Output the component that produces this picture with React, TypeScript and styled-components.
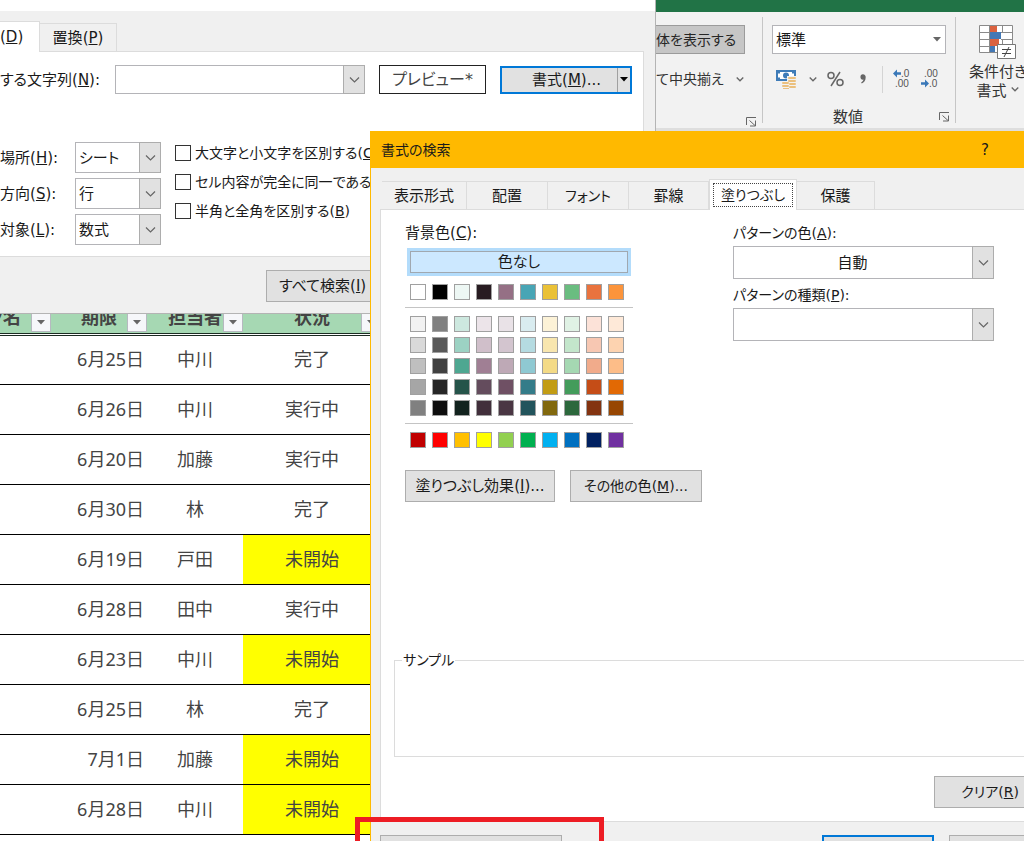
import React from "react";
import styled, { createGlobalStyle, css } from "styled-components";

const GlobalStyle = createGlobalStyle`
  *, *::before, *::after { box-sizing: border-box; }
  html, body { margin: 0; padding: 0; height: 100%; overflow: hidden; }
  body, button, input, select {
    font-family: "DejaVu Sans", "Noto Sans CJK JP", sans-serif;
    font-size: 15px;
    line-height: 20px;
    color: #1a1a1a;
    font-feature-settings: "palt";
  }
`;

const Desktop = styled.div`
  position: relative;
  height: 100vh;
  overflow: hidden;
  background: #fff;
`;

/* ---------- Workbook window ---------- */

const WorkbookTitle = styled.div`
  height: 12px;
  background: #217346;
`;

const Ribbon = styled.div`
  display: flex;
  height: 119px;
  padding: 5px 0 5px 656px;
  background: #f2f2f2;
  border-bottom: 3px solid #dedede;
`;

const RibbonGroup = styled.section<{ $width?: number; $clipped?: boolean }>`
  display: grid;
  grid-template-columns: 100%;
  grid-template-rows: 29px 50px 1fr;
  flex: ${(p) => (p.$width ? `0 0 ${p.$width}px` : "1 0 0")};
  padding: 8px 9px 0 ${(p) => (p.$clipped ? 0 : 9)}px;
  border-right: ${(p) => (p.$width ? "1px solid #c6c6c6" : "0")};
`;

const RibbonRow = styled.div<{ $gap?: number; $inset?: number }>`
  display: flex;
  align-items: center;
  gap: ${(p) => p.$gap ?? 0}px;
  padding-left: ${(p) => p.$inset ?? 0}px;
  white-space: nowrap;
`;

const WrapToggle = styled.button`
  width: 89px;
  height: 29px;
  padding: 0;
  border: 1px solid #9b9b9b;
  border-left: 0;
  background: #c6c6c6;
  color: #262626;
  font-size: 14px;
  text-align: left;
`;

const ToolButton = styled.button<{ $width?: number }>`
  display: flex;
  align-items: center;
  justify-content: center;
  flex: none;
  width: ${(p) => (p.$width ? `${p.$width}px` : "auto")};
  padding: 0;
  gap: 12px;
  border: 0;
  background: none;
  color: #333;
  font-size: 14px;
`;

const GroupFooter = styled.div`
  display: grid;
  grid-template-columns: 1fr 26px;
  align-items: center;
  align-self: end;
  text-align: center;
  color: #333;
  margin: 0 -4px -4px 0;
  button { justify-self: end; }
`;

const Divider = styled.span`
  width: 1px;
  height: 27px;
  background: #d4d4d4;
`;

const ConditionalButton = styled.button`
  display: flex;
  flex-direction: column;
  align-items: center;
  align-self: start;
  width: 66px;
  padding: 0;
  border: 0;
  background: none;
  color: #333;
  white-space: nowrap;
  line-height: 19px;
  svg:first-child { margin-bottom: 3px; }
`;

const FormulaArea = styled.div`
  height: 171px;
  background: #e6e6e6;
`;

const Sheet = styled.table`
  width: calc(100% + 77px);
  margin-left: -77px;
  border-collapse: collapse;
  table-layout: fixed;
  font-family: "Noto Sans", "Noto Sans CJK JP", sans-serif;
  font-size: 18px;
  line-height: 24px;
  color: #444;
`;

const HeadCell = styled.th`
  height: 32px;
  padding: 0;
  background: #a6d8b3;
  border-bottom: 3px double #1c2b22;
`;

const HeadContent = styled.div`
  display: grid;
  height: 30px;
  align-items: center;
  justify-items: center;
  > * { grid-area: 1 / 1; }
`;

const FilterButton = styled.button`
  display: grid;
  place-items: center;
  justify-self: end;
  align-self: end;
  width: 20px;
  height: 20px;
  padding: 0;
  border: 1px solid #b6b9c0;
  background: #f6f7fa;
`;

const Cell = styled.td<{ $align?: string; $fill?: boolean }>`
  height: 50px;
  padding: 0 3px 1px;
  border-bottom: 1px solid #000;
  text-align: ${(p) => p.$align ?? "center"};
  background: ${(p) => (p.$fill ? "#ff0" : "#fff")};
`;

/* ---------- Shared dialog parts ---------- */

const Button = styled.button<{ $width?: number; $primary?: boolean; $small?: boolean }>`
  display: flex;
  align-items: center;
  justify-content: center;
  flex: none;
  width: ${(p) => (p.$width ? `${p.$width}px` : "auto")};
  height: 32px;
  padding: 0 12px;
  border: ${(p) => (p.$primary ? "2px solid #0078d7" : "1px solid #adadad")};
  background: #e1e1e1;
  font-size: ${(p) => (p.$small ? 14 : 15)}px;
  white-space: nowrap;
`;

const Combo = styled.div<{ $width: number; $height: number; $center?: boolean }>`
  display: grid;
  flex: none;
  width: ${(p) => p.$width}px;
  height: ${(p) => p.$height}px;
  > * { grid-area: 1 / 1; }
  select {
    appearance: none;
    width: 100%;
    height: 100%;
    padding: 0 26px 0 3px;
    border: 1px solid #b4b4b8;
    border-radius: 0;
    background: #fff;
    ${(p) => p.$center && css`text-align: center; text-align-last: center; padding-left: 4px;`}
  }
`;

const ComboArrow = styled.span<{ $flat?: boolean }>`
  display: grid;
  place-items: center;
  justify-self: end;
  width: ${(p) => (p.$flat ? 18 : 22)}px;
  pointer-events: none;
  ${(p) => !p.$flat && css`border: 1px solid #adadad; background: #e1e1e1;`}
`;

const Tab = styled.button<{ $active?: boolean; $small?: boolean; $clipped?: boolean; $width: number }>`
  flex: none;
  width: ${(p) => p.$width}px;
  height: ${(p) => (p.$active ? 31 : 28)}px;
  margin-bottom: ${(p) => (p.$active ? -1 : 0)}px;
  padding: 3px;
  border: 1px solid #dcdcdc;
  border-left-width: ${(p) => (p.$active ? 1 : 0)}px;
  border-bottom: 0;
  background: ${(p) => (p.$active ? "#fff" : "#f0f0f0")};
  font-size: ${(p) => (p.$small ? 14 : 15)}px;
  white-space: nowrap;
  ${(p) => p.$clipped && css`padding-left: 0; border-left: 0; text-align: left;`}
`;

const TabFocus = styled.span`
  display: grid;
  place-items: center;
  height: 100%;
  border: 1px dotted #444;
`;

/* ---------- Find window ---------- */

const FindWindow = styled.section`
  position: absolute;
  top: 0;
  left: 0;
  width: 656px;
  background: #f0f0f0;
  border-right: 1px solid #b4b4b4;
  border-bottom: 1px solid #b4b4b4;
`;

const FindTitle = styled.div`
  height: 11px;
  background: #fff;
`;

const FindTabs = styled.div`
  display: flex;
  align-items: flex-end;
  height: 40px;
`;

const FindPanel = styled.div`
  display: flex;
  flex-direction: column;
  gap: 48px;
  margin-right: 11px;
  padding: 13px 0 11px;
  background: #fff;
  border: 1px solid #dcdcdc;
  border-left: 0;
`;

const FindRow = styled.div`
  display: flex;
  align-items: center;
  gap: 14px;
`;

const SearchLabel = styled.label`
  width: 101px;
  white-space: nowrap;
`;

const Preview = styled.output`
  display: grid;
  place-items: center;
  width: 107px;
  height: 29px;
  border: 1px solid #222;
  color: #444;
  font-size: 16px;
`;

const SplitButton = styled.div`
  display: flex;
  width: 132px;
  height: 28px;
  border: 2px solid #0078d7;
  background: #e1e1e1;
  button {
    border: 0;
    padding: 0;
    background: none;
  }
  button:first-child {
    flex: 1;
    padding-left: 14px;
  }
  button:last-child {
    display: grid;
    place-items: center;
    width: 13px;
    border-left: 1px solid #a0a0a0;
  }
`;

const OptionsRow = styled.div`
  display: flex;
  gap: 14px;
`;

const SelectStack = styled.div`
  display: grid;
  grid-template-columns: 75px auto;
  row-gap: 5px;
  align-items: center;
  white-space: nowrap;
`;

const CheckStack = styled.div`
  display: flex;
  flex-direction: column;
  gap: 9px;
  padding-top: 1px;
`;

const CheckLabel = styled.label`
  display: flex;
  align-items: center;
  gap: 4px;
  font-size: 14px;
  white-space: nowrap;
  input {
    appearance: none;
    width: 16px;
    height: 16px;
    margin: 0;
    border: 1px solid #333;
    background: #fff;
  }
`;

const FindFooter = styled.div`
  display: flex;
  padding: 13px 0 11px 266px;
`;

/* ---------- Format window ---------- */

const FormatWindow = styled.section`
  position: absolute;
  top: 131px;
  left: 370px;
  right: -47px;
  background: #f0f0f0;
  border-left: 1px solid #ffb900;
`;

const FormatTitle = styled.header`
  display: flex;
  align-items: center;
  justify-content: space-between;
  height: 37px;
  padding: 0 82px 0 10px;
  background: #ffb900;
  font-size: 14px;
  button {
    padding: 0;
    border: 0;
    background: none;
  }
`;

const FormatTabs = styled.div`
  display: flex;
  align-items: flex-end;
  height: 41px;
  padding-left: 11px;
`;

const FormatPanel = styled.div`
  display: flex;
  flex-direction: column;
  height: 613px;
  margin: 0 11px 0 9px;
  padding: 13px;
  border: 1px solid #dcdcdc;
  background: #fff;
`;

const FillColumns = styled.div`
  display: grid;
  grid-template-columns: 328px 1fr;
  padding-left: 11px;
`;

const Field = styled.div`
  display: flex;
  flex-direction: column;
  align-items: flex-start;
`;

const FieldLabel = styled.label<{ $small?: boolean }>`
  height: 23px;
  font-size: ${(p) => (p.$small ? 14 : 15)}px;
`;

const FieldStack = styled.div`
  display: flex;
  flex-direction: column;
  gap: 6px;
`;

const NoColorButton = styled.button`
  width: 224px;
  height: 28px;
  margin: 2px 2px 0;
  padding: 0;
  border: 3px solid #b3dcfb;
  outline: 1px solid #a0a8b0;
  outline-offset: -4px;
  background: #cce8ff;
`;

const Palette = styled.div`
  width: 228px;
`;

const SwatchGroup = styled.div`
  display: grid;
  grid-template-columns: repeat(10, 16px);
  gap: 5px 6px;
  padding: 8px 5px 7px;
  border-bottom: 1px solid #c4c4c4;
  &:last-child { border-bottom: 0; }
`;

const Swatch = styled.button<{ $color: string }>`
  width: 16px;
  height: 16px;
  padding: 0;
  border: 1px solid #a0a0a0;
  background: ${(p) => p.$color};
`;

const ButtonRow = styled.div`
  display: flex;
  gap: 15px;
  padding-top: 15px;
`;

const Sample = styled.fieldset`
  height: 107px;
  margin: auto 0 19px;
  padding: 0 7px;
  border: 1px solid #dcdcdc;
  font-size: 14px;
  legend { padding: 0 1px; }
`;

const PanelFooter = styled.div`
  display: flex;
  justify-content: flex-end;
`;

const FormatFooter = styled.footer`
  display: flex;
  gap: 15px;
  padding: 13px 10px 12px 9px;
  > :nth-child(2) { margin-left: auto; }
`;

const Callout = styled.div`
  position: absolute;
  top: 817px;
  left: 355px;
  width: 249px;
  height: 70px;
  border: 5px solid #ed1c24;
  pointer-events: none;
`;

/* ---------- Icons ---------- */

const Chevron = ({ size = 11, color = "#666" }: { size?: number; color?: string }) => (
  <svg width={size} height={size} viewBox="0 0 11 11" fill="none" stroke={color} strokeWidth={size < 11 ? 1.8 : 1.2}>
    <path d="M1 3.5 5.5 8 10 3.5" />
  </svg>
);

const Triangle = ({ color = "#666" }: { color?: string }) => (
  <svg width="8" height="5" viewBox="0 0 8 5" fill={color}>
    <path d="M0 0h8L4 4.5z" />
  </svg>
);

const Launcher = () => (
  <svg width="11" height="10" viewBox="0 0 11 10" fill="none" stroke="#666">
    <path d="M.5 8V.5H10M3.5 3.5 9 8.5M9.500 3.500V9H4" />
  </svg>
);

const CurrencyIcon = () => (
  <svg width="21" height="19" viewBox="0 0 21 19">
    <path d="M0 0h20v11H0z" fill="#3f7cb8" />
    <path d="M2 3.500h2V2h12v1.500h2v4h-2V9H4V7.500H2z" fill="#fff" />
    <path d="M7 5.500a3 3 0 0 1 6 0 3 3 0 0 1-6 0z" fill="#3f7cb8" />
    <path d="M11 6h9.500v13H6v-8h5z" fill="#f2f2f2" />
    <g fill="#ebc07e">
      <rect x="12" y="7" width="8" height="2" rx="1" />
      <rect x="12" y="10" width="8" height="2" rx="1" />
      <rect x="13" y="13" width="7" height="2" rx="1" />
      <rect x="13" y="16" width="7" height="2" rx="1" />
      <rect x="6" y="12" width="7" height="2" rx="1" />
      <rect x="6" y="15" width="7" height="2" rx="1" />
      <rect x="7" y="18" width="6" height="1" />
    </g>
  </svg>
);

const CommaIcon = () => (
  <svg width="7" height="10" viewBox="0 0 8 11" fill="#666">
    <path d="M3.200 0C5.500 0 6.500 1.500 6.500 3.500c0 3.500-1.800 6-4.500 7L1.300 9.500C3 8.600 3.800 7.500 3.900 6.200 1.800 6.600.5 5 .5 3.100.5 1.300 1.600 0 3.200 0z" />
  </svg>
);

const DecimalSvg = styled.svg`
  font: 10px "Liberation Sans", sans-serif;
  fill: #555;
`;

const DecimalIcon = ({ more }: { more?: boolean }) => (
  <DecimalSvg width="18" height="24" viewBox="0 0 18 24">
    {more ? (
      <>
        <text x="8" y="10">.0</text>
        <text x="2" y="20">.00</text>
        <path d="M0 6.500 4 2.500v2.800h4v2.400H4v2.800z" fill="#3a78b8" />
      </>
    ) : (
      <>
        <text x="3" y="10">.00</text>
        <text x="8" y="20">.0</text>
        <path d="M8 16.500 4 12.500v2.800H0v2.400h4v2.800z" fill="#3a78b8" />
      </>
    )}
  </DecimalSvg>
);

const ConditionalIcon = () => (
  <svg width="38" height="35" viewBox="0 0 38 35">
    <path d="M.5.500h33v27H.5z" fill="#fff" />
    <path d="M11 1h7v6h-7zM11 14h9v7h-9z" fill="#db6240" />
    <path d="M11 7h11v7H11zM11 21h5v6h-5z" fill="#4478b5" />
    <path d="M.5.500h33v27H.5zM.5 7.500H11M22 7.500h11.500M.5 14.500H11M22 14.500h11.500M.5 21.500H11M10.500.500v27M23.500.500v7M23.500 14v7" fill="none" stroke="#8a8a8a" />
    <path d="M18.500 19.500h18v14h-18z" fill="#fff" stroke="#777" />
    <path d="M23 24.500h9M23 28.500h9M30 22l-5 10" fill="none" stroke="#444" />
  </svg>
);

/* ---------- Data ---------- */

const tasks = [
  ["6月25日", "中川", "完了"],
  ["6月26日", "中川", "実行中"],
  ["6月20日", "加藤", "実行中"],
  ["6月30日", "林", "完了"],
  ["6月19日", "戸田", "未開始"],
  ["6月28日", "田中", "実行中"],
  ["6月23日", "中川", "未開始"],
  ["6月25日", "林", "完了"],
  ["7月1日", "加藤", "未開始"],
  ["6月28日", "中川", "未開始"],
];

const themeColors = ["#ffffff", "#000000", "#edf7f4", "#281c22", "#957085", "#48a5b5", "#eac137", "#6abd80", "#e9733e", "#fc943b"];

const tintColors = [
  "#f2f2f2", "#808080", "#cde8df", "#ece4e9", "#e9e2e7", "#d9ecf0", "#fcf2d7", "#e0f2e5", "#fce2d8", "#fee9d8",
  "#d9d9d9", "#595959", "#9cd2c3", "#d0bfca", "#d3c5cf", "#b5dbe1", "#f8e6ae", "#c3e6cb", "#f7c7b2", "#fdd3b0",
  "#bfbfbf", "#404040", "#4ea791", "#a07f94", "#bea9b6", "#8fc9d2", "#f3da86", "#a5d8b2", "#f1ab8b", "#fdbd88",
  "#a6a6a6", "#262626", "#25544a", "#644c5d", "#6f5064", "#347c89", "#c29c14", "#439c5b", "#c54d17", "#e26904",
  "#808080", "#0d0d0d", "#12221e", "#412f3b", "#4a3643", "#22545c", "#81680d", "#2c683c", "#833310", "#974602",
];

const standardColors = ["#c00000", "#ff0000", "#ffc000", "#ffff00", "#92d050", "#00b050", "#00b0f0", "#0070c0", "#002060", "#7030a0"];

const palette = [themeColors, tintColors, standardColors];

const searchSelects = [
  { id: "within", name: "場所", access: "H", value: "シート" },
  { id: "direction", name: "方向", access: "S", value: "行" },
  { id: "look-in", name: "対象", access: "L", value: "数式" },
];

const Access = ({ k, tail = "" }: { k: string; tail?: string }) => (
  <>
    (<u>{k}</u>){tail}
  </>
);

interface DropDownProps {
  id: string;
  value: string;
  width: number;
  height: number;
  center?: boolean;
  flat?: boolean;
  label?: string;
}

const DropDown = ({ id, value, width, height, center, flat, label }: DropDownProps) => (
  <Combo $width={width} $height={height} $center={center}>
    <select id={id} aria-label={label}>
      <option>{value}</option>
    </select>
    <ComboArrow $flat={flat}>{flat ? <Triangle /> : <Chevron />}</ComboArrow>
  </Combo>
);

const Workbook = () => (
  <>
    <WorkbookTitle />
    <Ribbon>
      <RibbonGroup $width={107} $clipped>
        <RibbonRow>
          <WrapToggle>体を表示する</WrapToggle>
        </RibbonRow>
        <RibbonRow>
          <ToolButton>
            て中央揃え
            <Chevron size={8} />
          </ToolButton>
        </RibbonRow>
        <GroupFooter>
          <span />
          <ToolButton aria-label="配置の設定"><Launcher /></ToolButton>
        </GroupFooter>
      </RibbonGroup>
      <RibbonGroup $width={193}>
        <RibbonRow>
          <DropDown id="number-format" label="表示形式" value="標準" width={174} height={29} flat />
        </RibbonRow>
        <RibbonRow $gap={10} $inset={4}>
          <ToolButton $width={41} aria-label="通貨表示形式">
            <CurrencyIcon />
            <Chevron size={8} />
          </ToolButton>
          <ToolButton $width={17} aria-label="パーセント スタイル">
            <svg width="17" height="16" viewBox="0 0 17 16" fill="none" stroke="#666" strokeWidth="1.5">
              <circle cx="4" cy="4.500" r="3" />
              <circle cx="13" cy="11.500" r="3" />
              <path d="M13 1 4 15" />
            </svg>
          </ToolButton>
          <ToolButton $width={18} aria-label="桁区切りスタイル"><CommaIcon /></ToolButton>
          <Divider />
          <ToolButton $width={18} aria-label="小数点以下の表示桁数を増やす"><DecimalIcon more /></ToolButton>
          <ToolButton $width={18} aria-label="小数点以下の表示桁数を減らす"><DecimalIcon /></ToolButton>
        </RibbonRow>
        <GroupFooter>
          <span>数値</span>
          <ToolButton aria-label="数値の設定"><Launcher /></ToolButton>
        </GroupFooter>
      </RibbonGroup>
      <RibbonGroup>
        <ConditionalButton>
          <ConditionalIcon />
          <span>条件付き</span>
          <span>書式 <Chevron size={8} /></span>
        </ConditionalButton>
      </RibbonGroup>
    </Ribbon>
    <FormulaArea />
    <Sheet>
      <colgroup>
        <col width="128" />
        <col width="96" />
        <col width="96" />
        <col width="138" />
        <col />
      </colgroup>
      <thead>
        <tr>
          {["タスク名", "期限", "担当者", "状況"].map((name) => (
            <HeadCell key={name} scope="col">
              <HeadContent>
                <span>{name}</span>
                <FilterButton aria-label={`${name}のフィルター`}><Triangle /></FilterButton>
              </HeadContent>
            </HeadCell>
          ))}
          <HeadCell />
        </tr>
      </thead>
      <tbody>
        {tasks.map(([due, owner, status], i) => (
          <tr key={i}>
            <Cell />
            <Cell $align="right">{due}</Cell>
            <Cell>{owner}</Cell>
            <Cell $fill={status === "未開始"}>{status}</Cell>
            <Cell />
          </tr>
        ))}
      </tbody>
    </Sheet>
  </>
);

const FindDialog = () => (
  <FindWindow aria-label="検索と置換">
    <FindTitle />
    <FindTabs role="tablist">
      <Tab role="tab" aria-selected $active $clipped $width={40}><Access k="D" /></Tab>
      <Tab role="tab" $width={77}>置換<Access k="P" /></Tab>
    </FindTabs>
    <FindPanel>
      <FindRow>
        <SearchLabel htmlFor="find-text">する文字列<Access k="N" tail=":" /></SearchLabel>
        <DropDown id="find-text" value="" width={250} height={29} />
        <Preview>プレビュー*</Preview>
        <SplitButton>
          <button>書式<Access k="M" tail="..." /></button>
          <button aria-label="書式のメニュー"><Triangle color="#000" /></button>
        </SplitButton>
      </FindRow>
      <OptionsRow>
        <SelectStack>
          {searchSelects.map((s) => (
            <React.Fragment key={s.id}>
              <label htmlFor={s.id}>{s.name}<Access k={s.access} tail=":" /></label>
              <DropDown id={s.id} value={s.value} width={86} height={31} />
            </React.Fragment>
          ))}
        </SelectStack>
        <CheckStack>
          <CheckLabel><input type="checkbox" /><span>大文字と小文字を区別する<Access k="C" /></span></CheckLabel>
          <CheckLabel><input type="checkbox" /><span>セル内容が完全に同一であるもの</span></CheckLabel>
          <CheckLabel><input type="checkbox" /><span>半角と全角を区別する<Access k="B" /></span></CheckLabel>
        </CheckStack>
      </OptionsRow>
    </FindPanel>
    <FindFooter>
      <Button>すべて検索<Access k="I" /></Button>
    </FindFooter>
  </FindWindow>
);

const FormatDialog = () => (
  <FormatWindow aria-label="書式の検索">
    <FormatTitle>
      <span>書式の検索</span>
      <button aria-label="ヘルプ">?</button>
    </FormatTitle>
    <FormatTabs role="tablist">
      <Tab role="tab" $width={85}>表示形式</Tab>
      <Tab role="tab" $width={81}>配置</Tab>
      <Tab role="tab" $width={81} $small>フォント</Tab>
      <Tab role="tab" $width={80}>罫線</Tab>
      <Tab role="tab" aria-selected $active $small $width={88}><TabFocus>塗りつぶし</TabFocus></Tab>
      <Tab role="tab" $width={78}>保護</Tab>
    </FormatTabs>
    <FormatPanel>
      <FillColumns>
        <Field>
          <FieldLabel as="span">背景色<Access k="C" tail=":" /></FieldLabel>
          <NoColorButton>色なし</NoColorButton>
          <Palette>
            {palette.map((colors, g) => (
              <SwatchGroup key={g}>
                {colors.map((color, i) => (
                  <Swatch key={i} $color={color} aria-label={color} />
                ))}
              </SwatchGroup>
            ))}
          </Palette>
          <ButtonRow>
            <Button $width={150}>塗りつぶし効果<Access k="I" tail="..." /></Button>
            <Button $width={132} $small>その他の色<Access k="M" tail="..." /></Button>
          </ButtonRow>
        </Field>
        <FieldStack>
          <Field>
            <FieldLabel $small htmlFor="pattern-color">パターンの色<Access k="A" tail=":" /></FieldLabel>
            <DropDown id="pattern-color" value="自動" width={261} height={33} center />
          </Field>
          <Field>
            <FieldLabel $small htmlFor="pattern-style">パターンの種類<Access k="P" tail=":" /></FieldLabel>
            <DropDown id="pattern-style" value="" width={261} height={33} />
          </Field>
        </FieldStack>
      </FillColumns>
      <Sample>
        <legend>サンプル</legend>
      </Sample>
      <PanelFooter>
        <Button $width={112} $small>クリア<Access k="R" /></Button>
      </PanelFooter>
    </FormatPanel>
    <FormatFooter>
      <Button $width={182} aria-label="セルから書式を選択" />
      <Button $width={112} $primary aria-label="OK" />
      <Button $width={112} aria-label="キャンセル" />
    </FormatFooter>
  </FormatWindow>
);

export default function App() {
  return (
    <Desktop>
      <GlobalStyle />
      <Workbook />
      <FindDialog />
      <FormatDialog />
      <Callout />
    </Desktop>
  );
}
